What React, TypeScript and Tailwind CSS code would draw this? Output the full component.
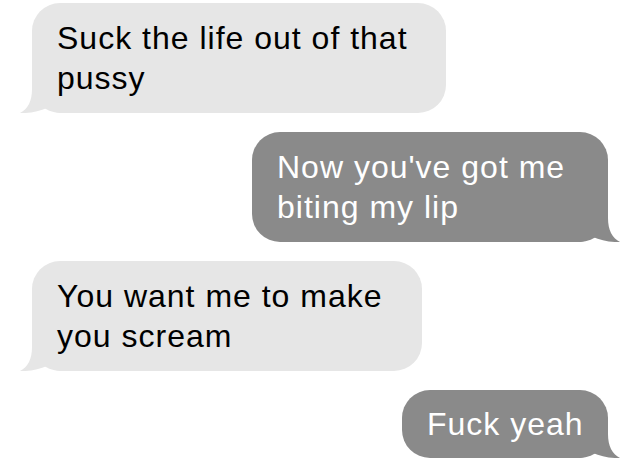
import React from "react";

type Msg = { from: "them" | "me"; lines: string[]; width: string };

const messages: Msg[] = [
  { from: "them", lines: ["Suck the life out of that", "pussy"], width: "w-[414px]" },
  { from: "me", lines: ["Now you've got me", "biting my lip"], width: "w-[356px]" },
  { from: "them", lines: ["You want me to make", "you scream"], width: "w-[390px]" },
  { from: "me", lines: ["Fuck yeah"], width: "w-[206px]" },
];

function Tail({ side, color }: { side: "left" | "right"; color: string }) {
  return (
    <svg
      width="46"
      height="30"
      viewBox="0 0 46 30"
      className={
        side === "right"
          ? "absolute bottom-0 right-[-14px]"
          : "absolute bottom-0 left-[-14px] -scale-x-100"
      }
    >
      <path
        d="M0 0 H32 V6 C32 18 36 26 44 30 C34 30.5 24 28 17 25 C12 28 8 30 0 30 Z"
        fill={color}
      />
    </svg>
  );
}

function Bubble({ msg }: { msg: Msg }) {
  const mine = msg.from === "me";
  return (
    <div className={mine ? "flex justify-end pr-[32px]" : "flex justify-start pl-[32px]"}>
      <div
        className={`relative ${msg.width} rounded-[28px] py-[14px] pl-[25px] pr-4 text-[32px] leading-[40px] tracking-[1px] ${
          mine ? "bg-[#8a8a8a] text-white" : "bg-[#e6e6e6] text-black"
        } ${msg.lines.length > 1 ? "py-[15px]" : ""}`}
      >
        <Tail side={mine ? "right" : "left"} color={mine ? "#8a8a8a" : "#e6e6e6"} />
        <p className="relative whitespace-nowrap">
          {msg.lines.map((l, i) => (
            <React.Fragment key={i}>
              {i > 0 && <br />}
              {l}
            </React.Fragment>
          ))}
        </p>
      </div>
    </div>
  );
}

export default function App() {
  return (
    <div className="w-[640px] h-[470px] overflow-hidden bg-white pt-[3px] flex flex-col gap-[19px] font-['Helvetica_Neue','Liberation_Sans',Arial,sans-serif]">
      {messages.map((m, i) => (
        <Bubble key={i} msg={m} />
      ))}
    </div>
  );
}
